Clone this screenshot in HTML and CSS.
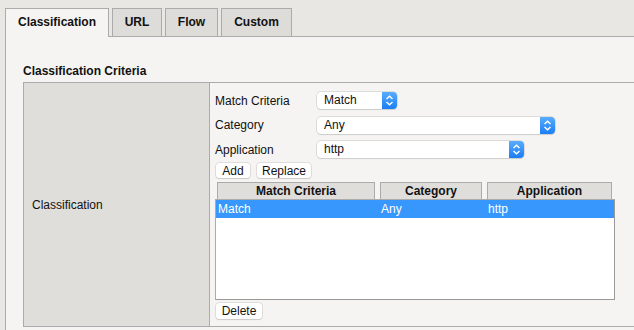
FILE: index.html
```html
<!DOCTYPE html>
<html lang="en">
<head>
    <meta charset="UTF-8">
    <title>Classification</title>
    <link rel="stylesheet" href="styles.css">
</head>
<body>
    <nav class="tabs">
        <div class="tab tab-classification active">Classification</div>
        <div class="tab tab-url">URL</div>
        <div class="tab tab-flow">Flow</div>
        <div class="tab tab-custom">Custom</div>
    </nav>

    <section class="panel">
        <h2 class="section-title">Classification Criteria</h2>

        <div class="criteria">
            <div class="criteria-label">Classification</div>

            <div class="criteria-body">
                <div class="field-row">
                    <label class="field-label">Match Criteria</label>
                    <div class="select select-match">
                        <span class="select-value">Match</span>
                        <span class="select-arrow">
                            <svg width="9" height="11" viewBox="0 0 9 11"><path d="M1.5 4 L4.5 1.2 L7.5 4 M1.5 7 L4.5 9.8 L7.5 7" fill="none" stroke="#fff" stroke-width="1.4"/></svg>
                        </span>
                    </div>
                </div>
                <div class="field-row">
                    <label class="field-label">Category</label>
                    <div class="select select-category">
                        <span class="select-value">Any</span>
                        <span class="select-arrow">
                            <svg width="9" height="11" viewBox="0 0 9 11"><path d="M1.5 4 L4.5 1.2 L7.5 4 M1.5 7 L4.5 9.8 L7.5 7" fill="none" stroke="#fff" stroke-width="1.4"/></svg>
                        </span>
                    </div>
                </div>
                <div class="field-row">
                    <label class="field-label">Application</label>
                    <div class="select select-app">
                        <span class="select-value">http</span>
                        <span class="select-arrow">
                            <svg width="9" height="11" viewBox="0 0 9 11"><path d="M1.5 4 L4.5 1.2 L7.5 4 M1.5 7 L4.5 9.8 L7.5 7" fill="none" stroke="#fff" stroke-width="1.4"/></svg>
                        </span>
                    </div>
                </div>

                <div class="button-row">
                    <button class="btn btn-add">Add</button>
                    <button class="btn btn-replace">Replace</button>
                </div>

                <div class="list-head">
                    <div class="col-head col-match">Match Criteria</div>
                    <div class="col-head col-category">Category</div>
                    <div class="col-head col-app">Application</div>
                </div>
                <div class="list-box">
                    <div class="list-row selected">
                        <span class="col-match">Match</span>
                        <span class="col-category">Any</span>
                        <span class="col-app">http</span>
                    </div>
                </div>

                <button class="btn btn-delete">Delete</button>
            </div>
        </div>
    </section>
</body>
</html>
```

FILE: styles.css
```css
* {
    margin: 0;
    padding: 0;
    box-sizing: border-box;
}

body {
    background-color: #e8e7e4;
    color: #111;
    font-family: "Liberation Sans", Arial, sans-serif;
    font-size: 12px;
    overflow: hidden;
    width: 634px;
    height: 330px;
}

/* tab strip */
.tabs {
    display: flex;
    align-items: flex-end;
    gap: 3px;
    padding: 8px 0 0 5px;
    height: 36px;
}

.tab {
    height: 28px;
    line-height: 27px;
    text-align: center;
    font-weight: bold;
    background-color: #dddcd9;
    border: 1px solid #ababab;
    border-bottom: none;
    white-space: nowrap;
}

.tab-classification { width: 104px; }
.tab-url { width: 50px; }
.tab-flow { width: 53px; }
.tab-custom { width: 71px; }

.tab.active {
    position: relative;
    height: 29px;
    margin-bottom: -1px;
    background-color: #f5f4f2;
    z-index: 1;
}

/* panel */
.panel {
    margin-left: 5px;
    height: 294px;
    background-color: #f5f4f2;
    border-top: 1px solid #ababab;
    border-left: 1px solid #ababab;
    padding: 27px 0 0 17px;
}

.section-title {
    font-size: 12px;
    font-weight: bold;
    line-height: 14px;
    margin-bottom: 4px;
}

.criteria {
    display: flex;
    width: 611px;
    border: 1px solid #ababab;
    border-right: none;
}

.criteria-label {
    width: 186px;
    background-color: #dfdedb;
    border-right: 1px solid #ababab;
    display: flex;
    align-items: center;
    padding-left: 8px;
    padding-top: 1px;
}

.criteria-body {
    padding: 9px 0 7px 5px;
}

.field-row {
    display: flex;
    align-items: center;
    height: 17px;
    margin-bottom: 7.5px;
}

.field-row:nth-child(3) {
    margin-bottom: 5px;
}

.field-label {
    width: 102px;
}

/* select boxes */
.select {
    display: flex;
    height: 17px;
    background-color: #fff;
    border-radius: 4px;
    box-shadow: 0 0 0 0.5px #c4c4c4, 0 1px 1px rgba(0, 0, 0, 0.12);
}

.select-match { width: 80px; }
.select-category { width: 238px; }
.select-app { width: 207px; }

.select-value {
    flex: 1;
    padding-left: 7px;
    line-height: 17px;
}

.select-arrow {
    width: 15px;
    display: flex;
    align-items: center;
    justify-content: center;
    background: linear-gradient(#5aacff, #1b7ef4);
    border-radius: 0 4px 4px 0;
}

/* buttons */
.button-row {
    display: flex;
    gap: 6px;
    margin-bottom: 4px;
}

.btn {
    height: 15px;
    font-family: "Liberation Sans", Arial, sans-serif;
    font-size: 12px;
    line-height: 14px;
    background-color: #fff;
    border: none;
    border-radius: 3px;
    box-shadow: 0 0 0 0.5px #c8c8c8, 0 1px 1px rgba(0, 0, 0, 0.15);
    margin-left: 1px;
    color: #111;
}

.btn-add { width: 34px; }
.btn-replace { width: 54px; }

.btn-delete {
    width: 46px;
    height: 16px;
    margin-top: 3px;
}

/* list */
.list-head {
    display: flex;
    padding-left: 2px;
    height: 17px;
}

.col-head {
    height: 17px;
    background-color: #dfdedb;
    border: 1px solid #ababab;
    border-bottom: none;
    font-weight: bold;
    text-align: center;
    line-height: 16px;
}

.list-head .col-match { width: 158px; margin-right: 5px; }
.list-head .col-category { width: 102px; margin-right: 5px; }
.list-head .col-app { width: 125px; }

.list-box {
    width: 400px;
    height: 101px;
    background-color: #fff;
    border: 1px solid #ababab;
    border-right-color: #999;
    border-bottom-color: #999;
}

.list-row {
    display: flex;
    height: 18px;
    line-height: 18px;
}

.list-row.selected {
    background-color: #3797fd;
    color: #fff;
}

.list-row .col-match { width: 165px; padding-left: 2px; }
.list-row .col-category { width: 107px; }
```
